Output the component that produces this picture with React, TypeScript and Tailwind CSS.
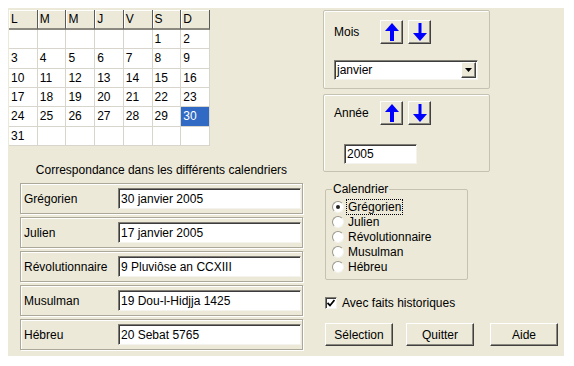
const days: (number | null)[] = [
  null, null, null, null, null, 1, 2,
  3, 4, 5, 6, 7, 8, 9,
  10, 11, 12, 13, 14, 15, 16,
  17, 18, 19, 20, 21, 22, 23,
  24, 25, 26, 27, 28, 29, 30,
  31, null, null, null, null, null, null,
];

const heads = ["L", "M", "M", "J", "V", "S", "D"];

const rows = [
  { label: "Grégorien", value: "30 janvier 2005" },
  { label: "Julien", value: "17 janvier 2005" },
  { label: "Révolutionnaire", value: "9 Pluviôse an CCXIII" },
  { label: "Musulman", value: "19 Dou-l-Hidjja 1425" },
  { label: "Hébreu", value: "20 Sebat 5765" },
];

const radios = ["Grégorien", "Julien", "Révolutionnaire", "Musulman", "Hébreu"];

const bevel =
  "border border-t-white border-l-white border-r-[#404040] border-b-[#404040] shadow-[inset_-1px_-1px_0_#8c8a80] bg-[#ece9d8]";
const sunken =
  "border border-t-[#7f7d74] border-l-[#7f7d74] border-r-[#f4f3ee] border-b-[#f4f3ee] shadow-[inset_1px_1px_0_#3c3c3c] bg-white";

function Arrow({ down = false }: { down?: boolean }) {
  return (
    <button className={`flex h-[24px] w-[23px] items-center justify-center ${bevel}`}>
      <svg width="14" height="18" viewBox="0 0 14 18" className={down ? "rotate-180" : ""}>
        <path d={down ? "M7 0 L14 8 L8.5 8 L8.5 18 L5.5 18 L5.5 8 L0 8 Z" : "M7 0 L14 8 L9 8 L9 18 L5 18 L5 8 L0 8 Z"} fill="#0000ff" />
      </svg>
    </button>
  );
}

function Calendar() {
  return (
    <div className="ml-[1px] mt-[2px] grid h-[136px] w-[201px] grid-cols-7 grid-rows-[20px_repeat(6,1fr)] bg-white text-[12px] text-black">
      {heads.map((h, i) => (
        <div
          key={i}
          className="flex items-center border-b-2 border-r border-b-[#8c8a80] border-r-[#5a5a5a] bg-[#ece9d8] pl-[2px] shadow-[inset_1px_1px_0_#fff]"
        >
          {h}
        </div>
      ))}
      {days.map((d, i) => (
        <div
          key={i}
          className={`flex items-center border-b border-r border-[#d8d6cc] pl-[2px] ${
            d === 30 ? "bg-[#316ac5] text-white" : ""
          }`}
        >
          {d ?? ""}
        </div>
      ))}
    </div>
  );
}

export default function App() {
  return (
    <div className="h-[366px] w-[574px] bg-white p-[8px] font-['Liberation_Sans',Arial,sans-serif] text-[12px] leading-[14px] text-black">
      <div className="flex h-[348px] w-[556px] bg-[#ece9d8]">
        {/* gauche */}
        <div className="flex w-[315px] flex-col">
          <Calendar />
          <div className="ml-[12px] mt-[17px] flex w-[283px] flex-col">
            <p className="text-center">Correspondance dans les différents calendriers</p>
            <div className="mt-[6px] flex flex-col gap-[3px]">
              {rows.map((r) => (
                <div
                  key={r.label}
                  className="flex h-[31px] items-center border border-[#aca899] pl-[3px] shadow-[inset_1px_1px_0_#fff,1px_1px_0_#fff]"
                >
                  <span className="w-[94px]">{r.label}</span>
                  <div className={`flex h-[21px] w-[183px] items-center pl-[2px] ${sunken}`}>{r.value}</div>
                </div>
              ))}
            </div>
          </div>
        </div>

        {/* droite */}
        <div className="flex flex-1 flex-col pt-[2px]">
          <div className="h-[79px] w-[167px] rounded-[2px] border border-[#c5c2b2] px-[10px] pt-[9px] shadow-[inset_1px_1px_0_#fff]">
            <div className="flex items-center">
              <span className="w-[46px]">Mois</span>
              <div className="flex gap-[5px]">
                <Arrow />
                <Arrow down />
              </div>
            </div>
            <div className={`mt-[16px] flex h-[20px] w-[144px] items-center justify-between pl-[2px] pr-[1px] ${sunken}`}>
              <span>janvier</span>
              <span className={`flex h-[16px] w-[15px] items-center justify-center ${bevel}`}>
                <svg width="7" height="4" viewBox="0 0 7 4">
                  <path d="M0 0 L7 0 L3.5 4 Z" fill="#000" />
                </svg>
              </span>
            </div>
          </div>

          <div className="mt-[5px] h-[78px] w-[167px] rounded-[2px] border border-[#c5c2b2] px-[10px] pt-[6px] shadow-[inset_1px_1px_0_#fff]">
            <div className="flex items-center">
              <span className="w-[46px]">Année</span>
              <div className="flex gap-[5px]">
                <Arrow />
                <Arrow down />
              </div>
            </div>
            <div className={`ml-[10px] mt-[19px] flex h-[20px] w-[73px] items-center pl-[2px] ${sunken}`}>2005</div>
          </div>

          <fieldset className="ml-[2px] mt-[10px] w-[143px] rounded-[2px] border border-[#c5c2b2] pb-[5px] pl-[6px] pt-[3px]">
            <legend className="ml-[0px] px-[1px] leading-[14px]">Calendrier</legend>
            {radios.map((r, i) => (
              <div key={r} className="flex h-[15px] items-center gap-[2px]">
                <span className="flex h-[12px] w-[12px] items-center justify-center rounded-full border border-b-[#f4f3ee] border-l-[#9a988c] border-r-[#f4f3ee] border-t-[#9a988c] bg-white">
                  {i === 0 && <span className="h-[4px] w-[4px] rounded-full bg-[#222]" />}
                </span>
                <span className={i === 0 ? "border border-dotted border-black px-[1px]" : "px-[2px]"}>{r}</span>
              </div>
            ))}
          </fieldset>

          <div className="ml-[2px] mt-[16px] flex h-[14px] items-center gap-[5px]">
            <span className={`flex h-[12px] w-[12px] items-center justify-center ${sunken}`}>
              <svg width="8" height="8" viewBox="0 0 8 8">
                <path d="M0.5 4 L3 6.5 L7.5 1" stroke="#000" strokeWidth="1.8" fill="none" />
              </svg>
            </span>
            <span>Avec faits historiques</span>
          </div>

          <div className="ml-[2px] mt-[13px] flex">
            <button className={`h-[23px] w-[68px] ${bevel}`}>Sélection</button>
            <button className={`ml-[13px] h-[23px] w-[68px] ${bevel}`}>Quitter</button>
            <button className={`ml-[16px] h-[23px] w-[68px] ${bevel}`}>Aide</button>
          </div>
        </div>
      </div>
    </div>
  );
}
